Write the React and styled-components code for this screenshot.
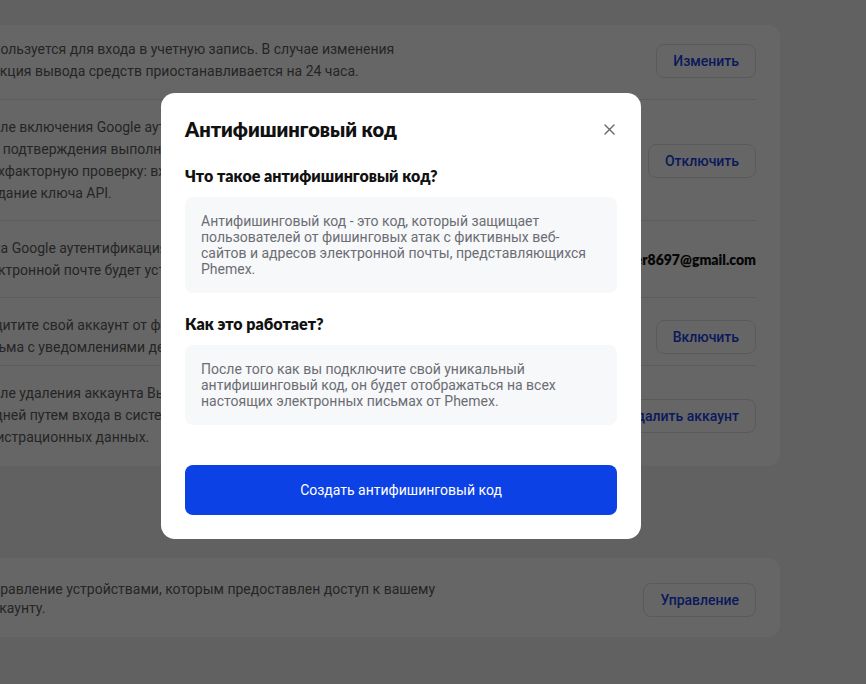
import styled, { createGlobalStyle } from 'styled-components';

const GlobalStyle = createGlobalStyle`
  html, body {
    margin: 0;
    padding: 0;
    overflow: hidden;
  }
  body {
    background: #f2f2f2;
    font-family: Roboto, "Liberation Sans", sans-serif;
  }
`;

const Page = styled.div`
  width: 866px;
  height: 684px;
  overflow: hidden;
  padding-top: 25px;
  box-sizing: border-box;
`;

const Column = styled.div`
  width: 1080px;
  margin-left: -300px;
  display: flex;
  flex-direction: column;
  gap: 92px;
`;

const Card = styled.section`
  background: #fff;
  border-radius: 12px;
  padding: 0 24px 0 ${(p) => p.$indent}px;
`;

const Row = styled.div`
  display: flex;
  align-items: center;
  gap: 24px;
  padding: ${(p) => p.$pad || '16px 0'};
  border-bottom: 1px solid #e6e6e6;

  &:last-child {
    border-bottom: none;
  }
`;

const Desc = styled.p`
  flex: 1;
  margin: 0;
  font-size: 14px;
  line-height: ${(p) => p.$lh || 22}px;
  color: #5e5e5e;
  white-space: nowrap;
`;

const OutlineButton = styled.button`
  flex-shrink: 0;
  height: 34px;
  padding: 0 16px;
  margin-top: 1px;
  border: 1px solid #e1e1e1;
  border-radius: 8px;
  background: #fff;
  color: #1941e6;
  font-family: Roboto, "Liberation Sans", sans-serif;
  font-size: 14px;
  font-weight: 500;
`;

const Email = styled.span`
  flex-shrink: 0;
  font-family: Lato, "Noto Sans", sans-serif;
  font-weight: 800;
  font-size: 14px;
  color: #111;
`;

const Overlay = styled.div`
  position: fixed;
  inset: 0;
  background: rgba(0, 0, 0, 0.6);
  display: flex;
  align-items: flex-start;
  padding: 93px 0 0 161px;
`;

const Modal = styled.div`
  width: 480px;
  box-sizing: border-box;
  padding: 22px 24px 24px;
  background: #fff;
  border-radius: 14px;
  display: flex;
  flex-direction: column;
`;

const Header = styled.div`
  display: flex;
  align-items: center;
  justify-content: space-between;
  height: 28px;
`;

const Title = styled.h2`
  margin: 0;
  font-family: Lato, "Noto Sans", sans-serif;
  font-weight: 800;
  font-size: 20px;
  color: #111;
`;

const CloseButton = styled.button`
  width: 16px;
  height: 16px;
  padding: 0;
  border: none;
  background: none;
  display: flex;
  align-items: center;
  justify-content: center;
`;

const Subtitle = styled.h3`
  margin: ${(p) => (p.$first ? '22px' : '20px')} 0 10px;
  font-family: Lato, "Noto Sans", sans-serif;
  font-weight: 800;
  font-size: 16px;
  line-height: 22px;
  color: #111;
`;

const InfoBox = styled.div`
  background: #f7f8fa;
  border-radius: 8px;
  padding: 16px;
  font-size: 14px;
  line-height: 16px;
  color: #6b6d73;
`;

const PrimaryButton = styled.button`
  margin-top: 40px;
  height: 50px;
  width: 100%;
  border: none;
  border-radius: 8px;
  background: #0c41e6;
  color: #fff;
  font-family: Roboto, "Liberation Sans", sans-serif;
  font-size: 14px;
`;

const CloseIcon = () => (
  <svg width="11" height="11" viewBox="0 0 11 11">
    <path d="M1 1L10 10M10 1L1 10" stroke="#666" strokeWidth="1.4" strokeLinecap="round" />
  </svg>
);

export default function App() {
  return (
    <>
      <GlobalStyle />
      <Page>
        <Column>
          <Card $indent={275}>
            <Row $pad="13px 0 17px">
              <Desc>
                Используется для входа в учетную запись. В случае изменения
                <br />
                функция вывода средств приостанавливается на 24 часа.
              </Desc>
              <OutlineButton>Изменить</OutlineButton>
            </Row>
            <Row>
              <Desc>
                После включения Google аутентификации
                <br />
                для подтверждения выполнения операций
                <br />
                двухфакторную проверку: вход, вывод
                <br />
                создание ключа API.
              </Desc>
              <OutlineButton>Отключить</OutlineButton>
            </Row>
            <Row>
              <Desc>
                Пока Google аутентификация включена, код
                <br />
                электронной почте будет установлен
              </Desc>
              <Email>phemexuser8697@gmail.com</Email>
            </Row>
            <Row $pad="16px 0 7px">
              <Desc>
                Защитите свой аккаунт от фишинга
                <br />
                письма с уведомлениями деактивированы
              </Desc>
              <OutlineButton>Включить</OutlineButton>
            </Row>
            <Row $pad="16px 0 18px">
              <Desc>
                После удаления аккаунта Вы не сможете
                <br />
                30 дней путем входа в систему
                <br />
                регистрационных данных.
              </Desc>
              <OutlineButton>Удалить аккаунт</OutlineButton>
            </Row>
          </Card>
          <Card $indent={284}>
            <Row $pad="22px 0 19px">
              <Desc $lh={19}>
                Управление устройствами, которым предоставлен доступ к вашему
                <br />
                аккаунту.
              </Desc>
              <OutlineButton>Управление</OutlineButton>
            </Row>
          </Card>
        </Column>
      </Page>
      <Overlay>
        <Modal>
          <Header>
            <Title>Антифишинговый код</Title>
            <CloseButton>
              <CloseIcon />
            </CloseButton>
          </Header>
          <Subtitle $first>Что такое антифишинговый код?</Subtitle>
          <InfoBox>
            Антифишинговый код - это код, который защищает
            <br />
            пользователей от фишинговых атак с фиктивных веб-
            <br />
            сайтов и адресов электронной почты, представляющихся
            <br />
            Phemex.
          </InfoBox>
          <Subtitle>Как это работает?</Subtitle>
          <InfoBox>
            После того как вы подключите свой уникальный
            <br />
            антифишинговый код, он будет отображаться на всех
            <br />
            настоящих электронных письмах от Phemex.
          </InfoBox>
          <PrimaryButton>Создать антифишинговый код</PrimaryButton>
        </Modal>
      </Overlay>
    </>
  );
}
